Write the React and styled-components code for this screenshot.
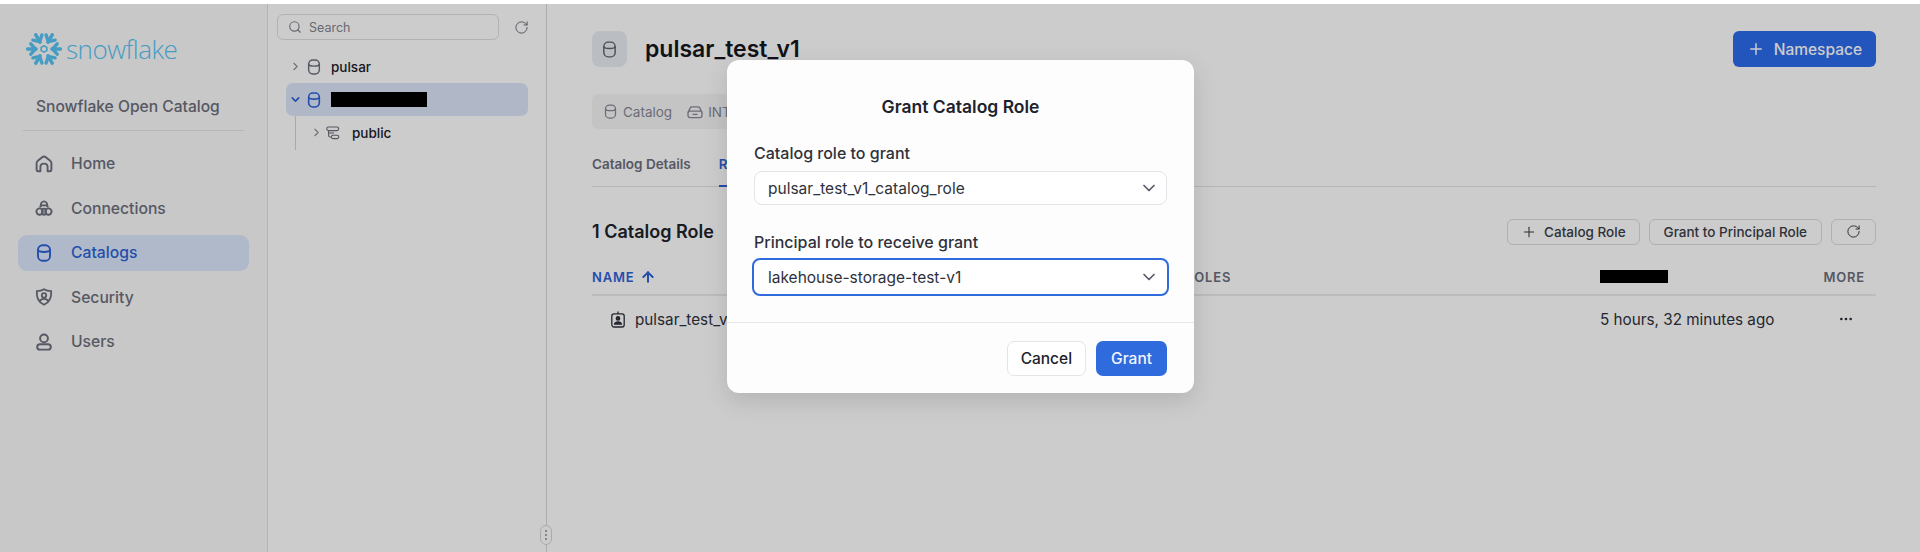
import React from 'react';
import styled, { createGlobalStyle } from 'styled-components';
import {
  Search,
  RotateCw,
  ChevronRight,
  ChevronDown,
  Plus,
  Ellipsis,
  ArrowUp,
} from 'lucide-react';

const GlobalStyle = createGlobalStyle`
  html, body {
    margin: 0;
    padding: 0;
    background: #fff;
    font-family: Inter, "Liberation Sans", sans-serif;
  }
  * { box-sizing: border-box; }
`;

const Page = styled.div`
  position: relative;
  width: 1920px;
  height: 552px;
  padding-top: 4px;
  overflow: hidden;
  display: flex;
`;

const Sidebar = styled.aside`
  width: 268px;
  flex: none;
  background: #fafafa;
  border-right: 1px solid #e2e2e2;
  padding: 27px 18px 0;
`;

const LogoRow = styled.div`
  display: flex;
  align-items: center;
  gap: 4px;
  padding-left: 8px;
  height: 36px;
`;

const LogoText = styled.span`
  font-family: "Open Sans", sans-serif;
  font-weight: 300;
  font-size: 26px;
  letter-spacing: -0.5px;
  color: #58c4f4;
`;

const ProductName = styled.div`
  margin: 30px 5px 0;
  padding: 0 0 13px 13px;
  border-bottom: 1px solid #e4e4e4;
  font-size: 15.6px;
  line-height: 20px;
  font-weight: 500;
  color: #6c6e7c;
`;

const NavList = styled.nav`
  margin-top: 15px;
  display: flex;
  flex-direction: column;
  gap: 9px;
`;

const NavItem = styled.div`
  height: 35.5px;
  display: flex;
  align-items: center;
  gap: 18px;
  padding-left: 17px;
  border-radius: 9px;
  font-size: 15.7px;
  font-weight: 500;
  background: ${(p) => (p.$active ? '#dbe8fd' : 'transparent')};
  color: ${(p) => (p.$active ? '#2d62d6' : '#6c6e7c')};
  svg { flex: none; }
`;

const TreePanel = styled.section`
  width: 279px;
  flex: none;
  position: relative;
  background: #fff;
  border-right: 1px solid #d8d8d8;
  padding: 10px 9px 0;
`;

const SearchRow = styled.div`
  display: flex;
  align-items: center;
  gap: 15px;
`;

const SearchBox = styled.div`
  width: 222px;
  height: 26px;
  display: flex;
  align-items: center;
  gap: 7px;
  padding-left: 10px;
  border: 1px solid #dfdfe2;
  border-radius: 6px;
  font-size: 12.5px;
  color: #82848f;
`;

const TreeList = styled.div`
  margin-top: 10px;
  padding-left: 9px;
  width: 251px;
`;

const TreeRow = styled.div`
  height: 33px;
  display: flex;
  align-items: center;
  padding-left: ${(p) => p.$indent || 3}px;
  border-radius: 7px;
  font-size: 13.5px;
  font-weight: 500;
  color: #20222b;
  background: ${(p) => (p.$active ? '#dce7fb' : 'transparent')};
`;

const TreeChild = styled.div`
  margin-left: 9px;
  border-left: 1px solid #d4d4d8;
  height: 34px;
  width: 233px;
`;

const TreeLabel = styled.span`
  margin-left: 12px;
`;

const Redacted = styled.div`
  width: ${(p) => p.$w}px;
  height: ${(p) => p.$h}px;
  background: #000;
  flex: none;
`;

const ResizeHandle = styled.div`
  position: absolute;
  right: -6px;
  bottom: 7px;
  width: 12px;
  height: 20px;
  border: 1px solid #d6d6d6;
  border-radius: 6px;
  background: #fff;
  display: flex;
  flex-direction: column;
  align-items: center;
  justify-content: center;
  gap: 2px;
  i {
    width: 2px;
    height: 2px;
    background: #a8a8a8;
  }
`;

const Main = styled.main`
  flex: 1;
  min-width: 0;
  background: #fff;
  padding: 27px 44px 0 45px;
`;

const TitleRow = styled.div`
  display: flex;
  align-items: center;
  gap: 18px;
  height: 36px;
`;

const TitleIcon = styled.div`
  width: 35px;
  height: 36px;
  border-radius: 8px;
  background: #e9edf3;
  color: #5f6270;
  display: flex;
  align-items: center;
  justify-content: center;
`;

const Title = styled.h1`
  margin: 0;
  flex: 1;
  font-size: 23px;
  font-weight: 600;
  color: #15171e;
`;

const PrimaryButton = styled.button`
  height: 36px;
  padding: 0 14px;
  border: none;
  border-radius: 6px;
  background: #2c6cec;
  color: #fff;
  font: 500 15.5px Inter, sans-serif;
  display: flex;
  align-items: center;
  gap: 9px;
`;

const TagStrip = styled.div`
  margin-top: 27px;
  width: 240px;
  height: 35px;
  padding-left: 11px;
  background: #f6f6f7;
  border-radius: 6px;
  display: flex;
  align-items: center;
  gap: 5px;
  font-size: 13.5px;
  color: #868895;
`;

const TagGap = styled.span`
  width: 5px;
`;

const Tabs = styled.div`
  margin-top: 25px;
  height: 33px;
  display: flex;
  gap: 28px;
  border-bottom: 1px solid #e3e3e6;
`;

const Tab = styled.div`
  height: 33px;
  padding-top: 2px;
  font-size: 13.5px;
  font-weight: 600;
  color: ${(p) => (p.$active ? '#2d62d6' : '#6c6e7c')};
  border-bottom: ${(p) => (p.$active ? '2px solid #2d62d6' : 'none')};
  width: ${(p) => (p.$active ? '120px' : 'auto')};
`;

const SectionHead = styled.div`
  margin-top: 31px;
  height: 27px;
  display: flex;
  align-items: center;
  justify-content: space-between;
`;

const SectionTitle = styled.h2`
  margin: 0;
  font-size: 18px;
  font-weight: 600;
  color: #20222b;
`;

const Actions = styled.div`
  display: flex;
  gap: 9px;
`;

const GhostButton = styled.button`
  height: 26px;
  padding: 0 ${(p) => (p.$tight ? '13px' : '14px')};
  border: 1px solid #dcdce0;
  border-radius: 6px;
  background: #fff;
  color: #3b3d48;
  font: 500 13.5px Inter, sans-serif;
  display: flex;
  align-items: center;
  gap: 7px;
`;

const TableHead = styled.div`
  margin-top: 17px;
  height: 34px;
  display: grid;
  grid-template-columns: 593px 415px 222px 1fr;
  align-items: center;
  border-bottom: 2px solid #ececee;
  font-size: 13px;
  font-weight: 600;
  letter-spacing: 0.8px;
  color: #6c6e7c;
  padding-bottom: 3px;
`;

const HeadName = styled.div`
  color: #2d62d6;
  display: flex;
  align-items: center;
  gap: 6px;
`;

const HeadMore = styled.div`
  text-align: right;
  padding-right: 11px;
`;

const TableRow = styled.div`
  height: 46px;
  display: grid;
  grid-template-columns: 1008px 222px 1fr;
  align-items: center;
  font-size: 15.25px;
  color: #2f313b;
`;

const RowName = styled.div`
  display: flex;
  align-items: center;
  gap: 10px;
  padding-left: 19px;
`;

const RowMore = styled.div`
  display: flex;
  justify-content: flex-end;
  padding-right: 22px;
`;

const Overlay = styled.div`
  position: absolute;
  inset: 4px 0 0;
  background: rgba(0, 0, 0, 0.2);
`;

const Modal = styled.div`
  position: absolute;
  left: 727px;
  top: 60px;
  width: 467px;
  height: 333px;
  border-radius: 12px;
  background: #fdfdfd;
  box-shadow: 0 8px 24px rgba(0, 0, 0, 0.12);
  display: flex;
  flex-direction: column;
`;

const ModalTitle = styled.h3`
  margin: 34px 0 0;
  text-align: center;
  font-size: 17.5px;
  line-height: 26px;
  font-weight: 600;
  color: #20222b;
`;

const Field = styled.div`
  margin: ${(p) => p.$top}px 27px 0;
`;

const FieldLabel = styled.div`
  font-size: 16px;
  line-height: 20px;
  font-weight: 500;
  color: #2f313b;
`;

const SelectBox = styled.div`
  height: ${(p) => (p.$focus ? '38px' : '34px')};
  margin: ${(p) => (p.$focus ? '6px -2px 0' : '8px 0 0')};
  padding: ${(p) => (p.$focus ? '0 8px 0 14px' : '0 7px 0 13px')};
  border: ${(p) => (p.$focus ? '2px solid #2f6bdd' : '1px solid #e4e4e7')};
  border-radius: 8px;
  display: flex;
  align-items: center;
  justify-content: space-between;
  font-size: 15.5px;
  color: #2f313b;
  background: #fff;
`;

const ModalFooter = styled.div`
  margin-top: 26px;
  border-top: 1px solid #e6e6e8;
  padding: 18px 27px 0;
  display: flex;
  justify-content: flex-end;
  gap: 10px;
`;

const FooterButton = styled.button`
  height: 35px;
  padding: 0 ${(p) => (p.$primary ? '15px' : '13px')};
  border-radius: 7px;
  border: ${(p) => (p.$primary ? 'none' : '1px solid #e4e4e7')};
  background: ${(p) => (p.$primary ? '#2f6bdd' : '#fff')};
  color: ${(p) => (p.$primary ? '#f2f5fc' : '#20222b')};
  font: 500 15.5px Inter, sans-serif;
`;

function SnowflakeMark() {
  const angles = [30, 90, 150, 210, 270, 330];
  return (
    <svg width="36" height="36" viewBox="-18 -18 36 36" fill="none" stroke="#58c4f4" strokeLinecap="round">
      {angles.map((a) => (
        <g key={a} transform={`rotate(${a})`}>
          <path d="M0 -8V-16.4" strokeWidth="3.6" />
          <path d="M-5.2 -13.2L0 -8.6L5.2 -13.2" strokeWidth="3.4" strokeLinejoin="round" />
        </g>
      ))}
      <polygon points="0,-3.2 2.8,-1.6 2.8,1.6 0,3.2 -2.8,1.6 -2.8,-1.6" strokeWidth="1.6" />
    </svg>
  );
}

function DbIcon({ size = 18, width = 1.9, className }) {
  return (
    <svg className={className} width={size} height={size} viewBox="0 0 18 18" fill="none" stroke="currentColor" strokeWidth={width}>
      <rect x="3" y="1.2" width="12" height="15.6" rx="4.6" />
      <path d="M3 5.6C3 7.2 5.6 8 9 8C12.4 8 15 7.2 15 5.6" />
    </svg>
  );
}

const TreeDb = styled(DbIcon)`
  margin: 0 9px 0 4px;
  flex: none;
  color: ${(p) => (p.$active ? '#2d62d6' : '#6c6e7c')};
`;

function HomeIcon() {
  return (
    <svg width="18" height="18" viewBox="0 0 18 18" fill="none" stroke="currentColor" strokeWidth="1.9" strokeLinejoin="round">
      <path d="M1.6 8.2C1.6 7.2 2 6.4 2.8 5.8L7.2 2.2C8.3 1.3 9.7 1.3 10.8 2.2L15.2 5.8C16 6.4 16.4 7.2 16.4 8.2V14.6C16.4 15.6 15.7 16.2 14.8 16.2H12.6V12C12.6 10 11 8.6 9 8.6C7 8.6 5.4 10 5.4 12V16.2H3.2C2.3 16.2 1.6 15.6 1.6 14.6Z" />
    </svg>
  );
}

function ConnectionsIcon() {
  return (
    <svg width="18" height="18" viewBox="0 0 18 18" fill="none" stroke="currentColor" strokeWidth="1.9">
      <path d="M5.8 6.4C5.8 4.2 7.2 2.4 9 2.4C10.8 2.4 12.2 4.2 12.2 6.4" />
      <path d="M4.6 8L6.6 6.4H11.4L13.4 8" />
      <circle cx="4.6" cy="12.6" r="3.2" />
      <circle cx="13.4" cy="12.6" r="3.2" />
      <path d="M9 9.6C7.8 9.6 7 11 7 12.6C7 14.2 7.8 15.8 9 15.8C10.2 15.8 11 14.2 11 12.6C11 11 10.2 9.6 9 9.6Z" />
    </svg>
  );
}

function ShieldUserIcon() {
  return (
    <svg width="18" height="18" viewBox="0 0 18 18" fill="none" stroke="currentColor" strokeWidth="1.8">
      <path d="M9 1.2C11 2.4 13.6 3 16.2 3.2C16.6 9.6 14.2 14.4 9 16.8C3.8 14.4 1.4 9.6 1.8 3.2C4.4 3 7 2.4 9 1.2Z" strokeLinejoin="round" />
      <circle cx="9" cy="7.4" r="2.2" />
      <path d="M4.8 13C5.6 11.4 7 10.8 9 10.8C11 10.8 12.4 11.4 13.2 13" />
    </svg>
  );
}

function PersonIcon() {
  return (
    <svg width="18" height="18" viewBox="0 0 18 18" fill="none" stroke="currentColor" strokeWidth="1.9">
      <circle cx="9" cy="5.4" r="3.9" />
      <rect x="2.2" y="11.2" width="13.6" height="5.4" rx="2.7" />
    </svg>
  );
}

function SchemaIcon() {
  return (
    <svg width="14" height="14" viewBox="0 0 14 14" fill="none" stroke="#6c6e7c" strokeWidth="1.1" style={{ marginLeft: 3 }}>
      <rect x="0.8" y="1" width="11.8" height="3.6" rx="1.6" />
      <path d="M2.6 4.6V9.6C2.6 10.6 3.2 11 4 11H5" />
      <path d="M2.6 7H8" />
      <rect x="5.4" y="9.2" width="7.4" height="3.4" rx="1.6" />
    </svg>
  );
}

function StorageIcon() {
  return (
    <svg width="16" height="14" viewBox="0 0 16 14" fill="none" stroke="currentColor" strokeWidth="1.3">
      <path d="M1 7.5L3.4 2.6C3.7 2 4.2 1.8 4.8 1.8H11.2C11.8 1.8 12.3 2 12.6 2.6L15 7.5" />
      <rect x="1" y="6.2" width="14" height="6.4" rx="2" />
      <path d="M5.5 9.4H10.5" />
    </svg>
  );
}

function RoleIcon() {
  return (
    <svg width="14" height="17" viewBox="0 0 14 17" fill="none" stroke="currentColor" strokeWidth="1.3">
      <rect x="0.8" y="2.8" width="12.4" height="13.2" rx="2.2" />
      <path d="M7 0.4V2.8" />
      <circle cx="7" cy="7.4" r="1.7" fill="currentColor" />
      <path d="M3.6 13C4 11.5 5.2 10.8 7 10.8C8.8 10.8 10 11.5 10.4 13Z" fill="currentColor" />
    </svg>
  );
}

export default function App() {
  return (
    <Page>
      <GlobalStyle />
      <Sidebar>
        <LogoRow>
          <SnowflakeMark />
          <LogoText>snowflake</LogoText>
        </LogoRow>
        <ProductName>Snowflake Open Catalog</ProductName>
        <NavList>
          <NavItem><HomeIcon />Home</NavItem>
          <NavItem><ConnectionsIcon />Connections</NavItem>
          <NavItem $active><DbIcon />Catalogs</NavItem>
          <NavItem><ShieldUserIcon />Security</NavItem>
          <NavItem><PersonIcon />Users</NavItem>
        </NavList>
      </Sidebar>

      <TreePanel>
        <SearchRow>
          <SearchBox><Search size={14} />Search</SearchBox>
          <RotateCw size={15} color="#6c6e7c" strokeWidth={1.6} />
        </SearchRow>
        <TreeList>
          <TreeRow>
            <ChevronRight size={13} color="#8a8c97" />
            <TreeDb size={16} width={1.6} />
            pulsar
          </TreeRow>
          <TreeRow $active>
            <ChevronDown size={13} color="#2d62d6" strokeWidth={3} />
            <TreeDb size={16} width={1.8} $active />
            <Redacted $w={96} $h={15} />
          </TreeRow>
          <TreeChild>
            <TreeRow $indent={14}>
              <ChevronRight size={13} color="#8a8c97" />
              <SchemaIcon />
              <TreeLabel>public</TreeLabel>
            </TreeRow>
          </TreeChild>
        </TreeList>
        <ResizeHandle><i /><i /><i /></ResizeHandle>
      </TreePanel>

      <Main>
        <TitleRow>
          <TitleIcon><DbIcon size={17} width={1.5} /></TitleIcon>
          <Title>pulsar_test_v1</Title>
          <PrimaryButton><Plus size={18} strokeWidth={2} />Namespace</PrimaryButton>
        </TitleRow>
        <TagStrip>
          <DbIcon size={15} width={1.5} />Catalog
          <TagGap />
          <StorageIcon />INT
        </TagStrip>
        <Tabs>
          <Tab>Catalog Details</Tab>
          <Tab $active>Roles</Tab>
        </Tabs>
        <SectionHead>
          <SectionTitle>1 Catalog Role</SectionTitle>
          <Actions>
            <GhostButton $tight><Plus size={16} strokeWidth={1.6} />Catalog Role</GhostButton>
            <GhostButton>Grant to Principal Role</GhostButton>
            <GhostButton><RotateCw size={15} strokeWidth={1.6} /></GhostButton>
          </Actions>
        </SectionHead>
        <TableHead>
          <HeadName>NAME <ArrowUp size={16} strokeWidth={3} /></HeadName>
          <span>ROLES</span>
          <Redacted $w={68} $h={13} />
          <HeadMore>MORE</HeadMore>
        </TableHead>
        <TableRow>
          <RowName><RoleIcon />pulsar_test_v1_catalog_role</RowName>
          <span>5 hours, 32 minutes ago</span>
          <RowMore><Ellipsis size={16} /></RowMore>
        </TableRow>
      </Main>

      <Overlay />
      <Modal>
        <ModalTitle>Grant Catalog Role</ModalTitle>
        <Field $top={23}>
          <FieldLabel>Catalog role to grant</FieldLabel>
          <SelectBox>
            pulsar_test_v1_catalog_role
            <ChevronDown size={20} color="#55576a" strokeWidth={2} />
          </SelectBox>
        </Field>
        <Field $top={27}>
          <FieldLabel>Principal role to receive grant</FieldLabel>
          <SelectBox $focus>
            lakehouse-storage-test-v1
            <ChevronDown size={20} color="#55576a" strokeWidth={2} />
          </SelectBox>
        </Field>
        <ModalFooter>
          <FooterButton>Cancel</FooterButton>
          <FooterButton $primary>Grant</FooterButton>
        </ModalFooter>
      </Modal>
    </Page>
  );
}
